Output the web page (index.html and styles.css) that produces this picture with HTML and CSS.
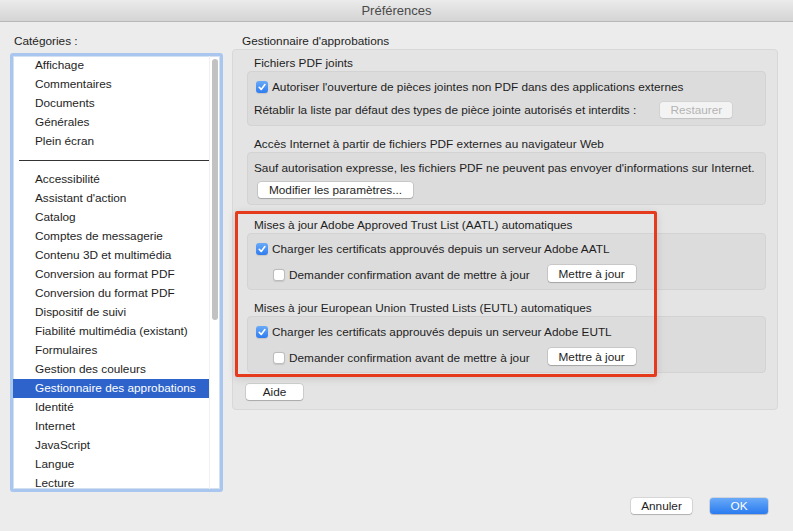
FILE: index.html
```html
<!DOCTYPE html>
<html lang="fr">
<head>
    <meta charset="UTF-8">
    <meta name="viewport" content="width=device-width, initial-scale=1.0">
    <title>Préférences</title>
    <link rel="stylesheet" href="styles.css">
</head>
<body>
    <div class="window">
        <div class="titlebar">Préférences</div>
        <div class="main">
            <div class="sidebar">
                <div class="caption">Catégories :</div>
                <div class="listbox">
                    <ul class="items">
                        <li>Affichage</li>
                        <li>Commentaires</li>
                        <li>Documents</li>
                        <li>Générales</li>
                        <li>Plein écran</li>
                        <li class="sep"></li>
                        <li>Accessibilité</li>
                        <li>Assistant d'action</li>
                        <li>Catalog</li>
                        <li>Comptes de messagerie</li>
                        <li>Contenu 3D et multimédia</li>
                        <li>Conversion au format PDF</li>
                        <li>Conversion du format PDF</li>
                        <li>Dispositif de suivi</li>
                        <li>Fiabilité multimédia (existant)</li>
                        <li>Formulaires</li>
                        <li>Gestion des couleurs</li>
                        <li class="selected">Gestionnaire des approbations</li>
                        <li>Identité</li>
                        <li>Internet</li>
                        <li>JavaScript</li>
                        <li>Langue</li>
                        <li>Lecture</li>
                    </ul>
                    <div class="scroll"><div class="thumb"></div></div>
                </div>
            </div>

            <div class="content">
                <div class="caption">Gestionnaire d'approbations</div>
                <div class="panel">
                    <section class="group">
                        <div class="group-title">Fichiers PDF joints</div>
                        <div class="group-box box-attach">
                            <label class="row">
                                <span class="cb on"><svg viewBox="0 0 12 12" width="12" height="12"><path d="M3.2 6.3 L5.2 8.4 L8.9 3.6" fill="none" stroke="#fff" stroke-width="1.6" stroke-linecap="round" stroke-linejoin="round"/></svg></span>
                                Autoriser l'ouverture de pièces jointes non PDF dans des applications externes
                            </label>
                            <div class="row">
                                Rétablir la liste par défaut des types de pièce jointe autorisés et interdits :
                                <button class="btn btn-restore" disabled>Restaurer</button>
                            </div>
                        </div>
                    </section>

                    <section class="group">
                        <div class="group-title">Accès Internet à partir de fichiers PDF externes au navigateur Web</div>
                        <div class="group-box box-web">
                            <div class="row">Sauf autorisation expresse, les fichiers PDF ne peuvent pas envoyer d'informations sur Internet.</div>
                            <div class="row"><button class="btn btn-modify">Modifier les paramètres...</button></div>
                        </div>
                    </section>

                    <div class="marked">
                        <section class="group">
                            <div class="group-title">Mises à jour Adobe Approved Trust List (AATL) automatiques</div>
                            <div class="group-box box-update">
                                <label class="row">
                                    <span class="cb on"><svg viewBox="0 0 12 12" width="12" height="12"><path d="M3.2 6.3 L5.2 8.4 L8.9 3.6" fill="none" stroke="#fff" stroke-width="1.6" stroke-linecap="round" stroke-linejoin="round"/></svg></span>
                                    Charger les certificats approuvés depuis un serveur Adobe AATL
                                </label>
                                <div class="row row-tall">
                                    <label class="sub"><span class="cb"></span>Demander confirmation avant de mettre à jour</label>
                                    <button class="btn btn-update">Mettre à jour</button>
                                </div>
                            </div>
                        </section>

                        <section class="group">
                            <div class="group-title">Mises à jour European Union Trusted Lists (EUTL) automatiques</div>
                            <div class="group-box box-update">
                                <label class="row">
                                    <span class="cb on"><svg viewBox="0 0 12 12" width="12" height="12"><path d="M3.2 6.3 L5.2 8.4 L8.9 3.6" fill="none" stroke="#fff" stroke-width="1.6" stroke-linecap="round" stroke-linejoin="round"/></svg></span>
                                    Charger les certificats approuvés depuis un serveur Adobe EUTL
                                </label>
                                <div class="row row-tall">
                                    <label class="sub"><span class="cb"></span>Demander confirmation avant de mettre à jour</label>
                                    <button class="btn btn-update">Mettre à jour</button>
                                </div>
                            </div>
                        </section>
                    </div>

                    <button class="btn btn-help">Aide</button>
                </div>
            </div>
        </div>

        <div class="footer">
            <button class="btn btn-cancel">Annuler</button>
            <button class="btn btn-ok">OK</button>
        </div>
    </div>
</body>
</html>
```

FILE: styles.css
```css
body {
    margin: 0;
    font-family: "Liberation Sans", Arial, sans-serif;
    font-size: 11.8px;
    color: #1e1e1e;
    background: #ececec;
}
.window {
    width: 793px;
    height: 531px;
    display: flex;
    flex-direction: column;
    overflow: hidden;
}
.titlebar {
    flex: none;
    height: 22px;
    box-sizing: border-box;
    line-height: 21px;
    text-align: center;
    font-size: 13px;
    color: #4a4a4a;
    background: linear-gradient(#ebebeb, #d4d4d4);
    border-bottom: 1px solid #b8b8b8;
}
.main {
    display: flex;
    gap: 9px;
    padding: 12px 0 0 10px;
}
.caption {
    height: 14px;
    line-height: 14px;
    white-space: nowrap;
}

/* left list */
.sidebar {
    width: 213px;
}
.sidebar .caption {
    padding-left: 4px;
    margin-bottom: 5px;
}
.listbox {
    height: 439px;
    box-sizing: border-box;
    display: flex;
    background: #fff;
    border: 3px solid #a9c6ef;
    border-radius: 3px;
    box-shadow: inset 0 0 0 1px #d3e0f3;
    overflow: hidden;
}
.items {
    flex: 1;
    list-style: none;
    margin: 0;
    padding: 0;
}
.items li {
    height: 19px;
    line-height: 19px;
    padding-left: 22px;
    white-space: nowrap;
}
.items .sep {
    display: flex;
    align-items: center;
    padding-left: 6px;
}
.items .sep::before {
    content: "";
    flex: 1;
    height: 1px;
    background: #333;
}
.items .selected {
    background: #2e63cc;
    color: #fff;
}
.scroll {
    width: 11px;
    box-sizing: border-box;
    padding: 3px 2px 0;
    border-left: 1px solid #f0f0f0;
}
.thumb {
    width: 6px;
    height: 261px;
    border-radius: 3px;
    background: #c2c2c2;
}

/* right pane */
.content {
    width: 546px;
}
.content .caption {
    padding-left: 10px;
    margin-bottom: 1px;
}
.panel {
    background: #e4e4e4;
    border: 1px solid #d8d8d8;
    border-radius: 4px;
    padding: 6px 11px 9px 14px;
}
.group + .group,
.group + .marked {
    margin-top: 11px;
}
.marked {
    position: relative;
    margin-top: 13px !important;
}
.marked::after {
    content: "";
    position: absolute;
    top: -7px;
    left: -12px;
    right: 109px;
    bottom: -4px;
    border: 3px solid #e63a1c;
    border-radius: 2px;
    box-shadow: 0 2px 8px rgba(0, 0, 0, 0.12);
    pointer-events: none;
}
.group-title {
    height: 15px;
    line-height: 15px;
    padding-left: 7px;
    white-space: nowrap;
}
.group-box {
    display: flex;
    flex-direction: column;
    padding: 7px 6px;
    background: #dcdcdc;
    border: 1px solid #d3d3d3;
    border-radius: 4px;
}
.box-attach {
    gap: 7px;
}
.box-web {
    padding-top: 7px;
    padding-bottom: 6px;
    gap: 6px;
}
.box-update {
    gap: 8px;
}
.row {
    display: flex;
    align-items: center;
    height: 16px;
    white-space: nowrap;
}
.row-tall {
    height: 17px;
}
.sub {
    display: flex;
    align-items: center;
    padding-top: 2px;
}

/* checkboxes */
.cb {
    flex: none;
    width: 12px;
    height: 12px;
    box-sizing: border-box;
    margin: 0 4px 0 2px;
    border-radius: 3px;
    background: #fff;
    border: 1px solid #bcbcbc;
    box-shadow: 0 0.5px 1px rgba(0, 0, 0, 0.1);
}
.cb svg {
    display: block;
    margin: -1px;
}
.cb.on {
    border: none;
    background: linear-gradient(#69aaf8, #2f7cf0);
}
.cb.on svg {
    margin: 0;
}
.sub .cb {
    margin-left: 19px;
}

/* buttons */
.btn {
    height: 16px;
    padding: 0;
    font: inherit;
    color: #1e1e1e;
    background: #fff;
    border: none;
    border-radius: 3px;
    box-shadow: 0 0 0 0.5px rgba(0, 0, 0, 0.18), 0 1px 1px rgba(0, 0, 0, 0.18);
    line-height: 16px;
}
.btn-restore {
    width: 72px;
    margin-left: 24px;
    color: #b3b3b3;
    background: #f3f3f3;
    box-shadow: 0 0 0 0.5px rgba(0, 0, 0, 0.08), 0 1px 1px rgba(0, 0, 0, 0.08);
}
.btn-modify {
    width: 155px;
    margin-left: 4px;
}
.btn-update {
    width: 88px;
    height: 17px;
    margin-left: 18px;
}
.btn-help {
    display: block;
    width: 57px;
    margin: 11px 0 0 -1px;
}
.footer {
    display: flex;
    justify-content: flex-end;
    gap: 18px;
    padding: 6px 25px 0 0;
}
.btn-cancel {
    width: 61px;
}
.btn-ok {
    width: 58px;
    color: #fff;
    background: linear-gradient(#69aaf8, #2a7bf0);
    box-shadow: 0 0 0 0.5px rgba(0, 40, 120, 0.25), 0 1px 1px rgba(0, 0, 0, 0.15);
}
```
